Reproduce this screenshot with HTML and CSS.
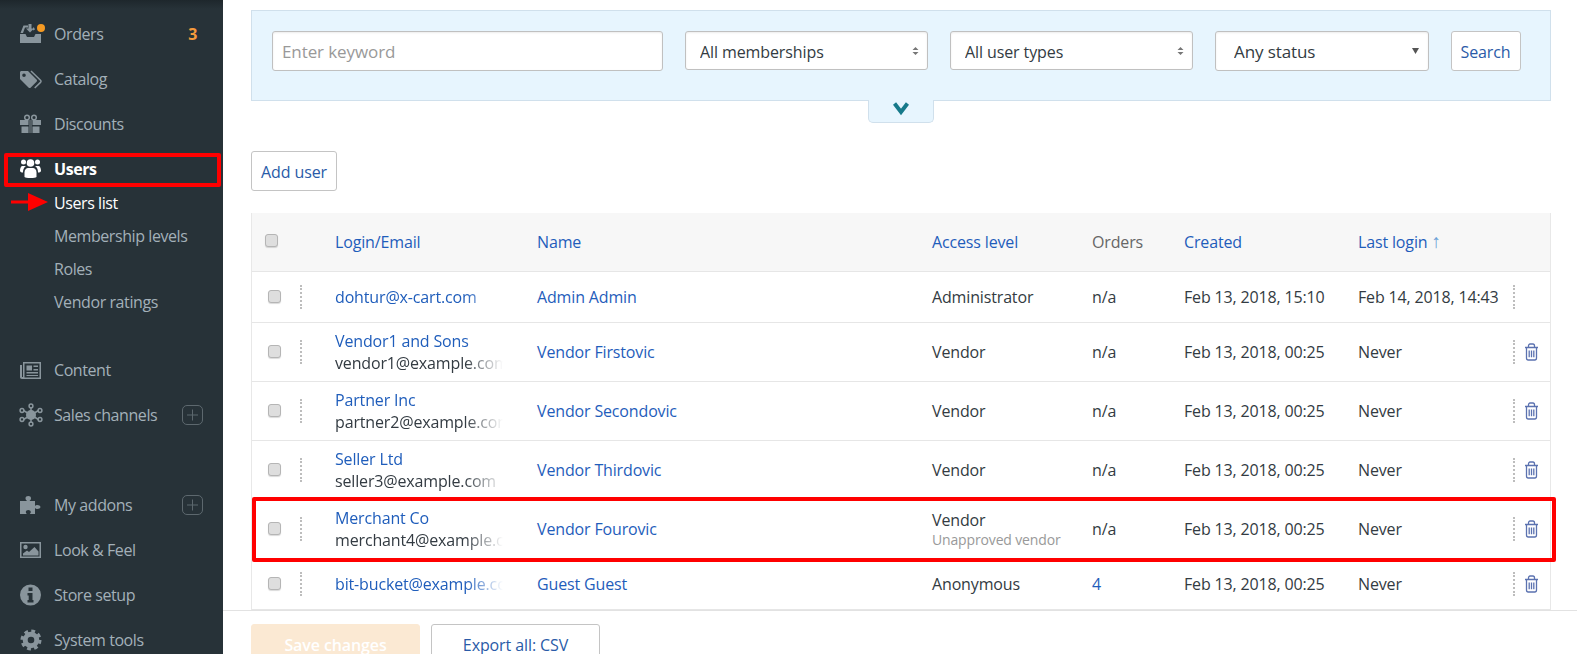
FILE: index.html
```html
<!DOCTYPE html>
<html>
  <head>
    <meta charset="UTF-8" />
    <title>Users list</title>
    <link rel="stylesheet" href="styles.css">
  </head>
  <body>
    <aside class="sidebar">
      <nav class="nav-group">
        <a class="nav-item">
          <svg class="nav-icon" viewBox="0 0 24 24">
            <path d="M1 12h5.500l1.500 3h7l1.500-3H22v9H1z"/>
            <path d="M1.500 11l3-7.500H9v2H6L4 11zM14 5.500h1l1 2-2 1z"/>
            <path d="M9.500 2h3v4.500H15L11 10.500 7 6.500h2.500z"/>
            <circle class="nav-icon-dot" cx="22" cy="6" r="4"/>
          </svg>
          <span class="nav-label">Orders</span>
          <span class="nav-count">3</span>
        </a>
        <a class="nav-item">
          <svg class="nav-icon" viewBox="0 0 24 24">
            <path fill-rule="evenodd" d="M1 5.500v6.500l8.500 8.500c.7.700 1.600.700 2.300 0l5.700-5.700c.7-.7.7-1.600 0-2.300L9 4H2.500C1.600 4 1 4.600 1 5.500zM5 6.500a1.800 1.800 0 1 1 0 3.600 1.800 1.800 0 0 1 0-3.600z"/>
            <path class="nav-icon-line" d="M12 4l9.500 9.200c.7.700.7 1.500 0 2.200l-5.800 5.600"/>
          </svg>
          <span class="nav-label">Catalog</span>
        </a>
        <a class="nav-item">
          <svg class="nav-icon" viewBox="0 0 24 24">
            <path d="M1 8h8.500v5H1zM13.500 8H22v5h-8.500zM2.500 14.500h7V21h-7zM13.500 14.500h7V21h-7z"/>
            <path d="M10 8h3v13h-3z" opacity=".45"/>
            <circle class="nav-icon-line" cx="8" cy="5.500" r="2.300"/>
            <circle class="nav-icon-line" cx="15" cy="5.500" r="2.300"/>
          </svg>
          <span class="nav-label">Discounts</span>
        </a>
        <div class="nav-item nav-item-active">
          <svg class="nav-icon" viewBox="0 0 24 24">
            <circle cx="11.500" cy="6" r="3.800"/>
            <circle cx="4.500" cy="5" r="2.500"/>
            <circle cx="18.500" cy="5" r="2.500"/>
            <path d="M5.500 20v-4.500c0-3 1.800-4.500 3.500-4.500h5c1.700 0 3.500 1.500 3.500 4.500V20c-1 .6-2.500 1-6 1s-5-.4-6-1z"/>
            <path d="M1 14c0-3 1-5 2.500-5H7c-1 .8-1.500 1.300-2 2.200-.7 1-1 2.500-1 4.300C2.500 15.500 1.500 15 1 14zM22 14c0-3-1-5-2.500-5H16c1 .8 1.500 1.300 2 2.200.7 1 1 2.500 1 4.300 1.500 0 2.500-.5 3-1.500z"/>
          </svg>
          <span class="nav-label">Users</span>
          <span class="note-nav"></span>
        </div>
        <ul class="nav-sub">
          <li class="nav-sub-item nav-sub-current">
            Users list
            <svg class="note-arrow" viewBox="0 0 38 18">
              <path d="M1 7.500h17v-7.500L38 9 18 18v-7.500H1z"/>
            </svg>
          </li>
          <li class="nav-sub-item">Membership levels</li>
          <li class="nav-sub-item">Roles</li>
          <li class="nav-sub-item">Vendor ratings</li>
        </ul>
      </nav>

      <nav class="nav-group nav-group-content">
        <a class="nav-item">
          <svg class="nav-icon" viewBox="0 0 24 24">
            <path fill-rule="evenodd" d="M4 4h18v17H3c-1.300 0-2-.8-2-2V7h2v12h1zM5.500 5.500v14h15v-14z"/>
            <path d="M7.500 7.500h5.500v5H7.500zM14.500 7.500h4.500V9h-4.500zM14.500 11h4.500v1.500h-4.500zM7.500 14h11.500v1.500H7.500zM7.500 17h11.500v1H7.500z"/>
          </svg>
          <span class="nav-label">Content</span>
        </a>
        <a class="nav-item">
          <svg class="nav-icon" viewBox="0 0 24 24">
            <circle cx="12" cy="12" r="5"/>
            <path class="nav-icon-line" d="M12 4v16M4.500 7.500l15 9M19.500 7.500l-15 9"/>
            <circle class="nav-icon-line" cx="12" cy="3" r="1.900"/>
            <circle class="nav-icon-line" cx="12" cy="21" r="1.900"/>
            <circle class="nav-icon-line" cx="3" cy="7.500" r="1.900"/>
            <circle class="nav-icon-line" cx="21" cy="7.500" r="1.900"/>
            <circle class="nav-icon-line" cx="3" cy="16.500" r="1.900"/>
            <circle class="nav-icon-line" cx="21" cy="16.500" r="1.900"/>
          </svg>
          <span class="nav-label">Sales channels</span>
          <svg class="nav-plus" viewBox="0 0 21 20">
            <rect x=".5" y=".5" width="20" height="19" rx="4.500"/>
            <path d="M10.500 4.500v11M5 10h11"/>
          </svg>
        </a>
      </nav>

      <nav class="nav-group nav-group-tools">
        <a class="nav-item">
          <svg class="nav-icon" viewBox="0 0 24 24">
            <path d="M1 8h7c-1-1-1.500-1.800-1.500-2.800C6.500 3.800 7.700 3 9.300 3s2.700.8 2.700 2.200c0 1-.5 1.800-1.500 2.800H16v5c.8-.8 1.500-1 2.300-1 1.500 0 3.200.7 3.200 2s-1.700 2-3.200 2c-.8 0-1.500-.2-2.300-1v6h-5.200c.7-.8 1-1.400 1-2.100 0-1.300-1.200-2-2.500-2s-2.500.7-2.500 2c0 .7.300 1.300 1 2.100H1z"/>
          </svg>
          <span class="nav-label">My addons</span>
          <svg class="nav-plus" viewBox="0 0 21 20">
            <rect x=".5" y=".5" width="20" height="19" rx="4.500"/>
            <path d="M10.500 4.500v11M5 10h11"/>
          </svg>
        </a>
        <a class="nav-item">
          <svg class="nav-icon" viewBox="0 0 24 24">
            <path fill-rule="evenodd" d="M1 4h21v16H1zM2.500 5.500v13h18v-13z"/>
            <circle cx="6.500" cy="9" r="2.200"/>
            <path d="M4 17.500v-2l4-3 2 1.500 5.500-5 4 4.500v4z"/>
          </svg>
          <span class="nav-label">Look &amp; Feel</span>
        </a>
        <a class="nav-item">
          <svg class="nav-icon" viewBox="0 0 24 24">
            <path fill-rule="evenodd" d="M11.500 1.500a10.500 10.500 0 1 1 0 21 10.500 10.500 0 0 1 0-21zM9.500 4.500v3.500h4V4.500zM8.500 10v2.500h1.200v4.500H8.500v2.500h6V17h-1v-7z"/>
          </svg>
          <span class="nav-label">Store setup</span>
        </a>
        <a class="nav-item">
          <svg class="nav-icon" viewBox="0 0 24 24">
            <circle class="nav-gear-ring" cx="12" cy="12" r="5.800"/>
            <circle class="nav-gear-teeth" cx="12" cy="12" r="9"/>
          </svg>
          <span class="nav-label">System tools</span>
        </a>
      </nav>
    </aside>

    <main class="main">
      <div class="content">
        <form class="filter">
          <input class="field field-keyword" type="text" placeholder="Enter keyword" />
          <div class="select-wrap select-wide">
            <select class="field field-select"><option>All memberships</option></select>
            <svg class="select-arrows" viewBox="0 0 7 8"><path d="M3.500 0L6.500 3h-6zM3.500 8L.5 5h6z"/></svg>
          </div>
          <div class="select-wrap select-wide">
            <select class="field field-select"><option>All user types</option></select>
            <svg class="select-arrows" viewBox="0 0 7 8"><path d="M3.500 0L6.500 3h-6zM3.500 8L.5 5h6z"/></svg>
          </div>
          <div class="select-wrap select-status">
            <select class="field field-select field-status"><option>Any status</option></select>
            <svg class="select-caret" viewBox="0 0 7 6"><path d="M0 0h7L3.500 6z"/></svg>
          </div>
          <button class="btn btn-search" type="button">Search</button>
        </form>
        <div class="filter-toggle">
          <svg viewBox="0 0 16 15"><path d="M1.500 2.500L8 11l6.500-8.500"/></svg>
        </div>

        <button class="btn btn-add" type="button">Add user</button>

        <div class="table-wrap">
          <table class="users">
            <colgroup>
              <col class="col-check" />
              <col class="col-drag" />
              <col class="col-login" />
              <col class="col-name" />
              <col class="col-access" />
              <col class="col-orders" />
              <col class="col-created" />
              <col class="col-last" />
              <col />
            </colgroup>
            <thead>
              <tr>
                <th class="cell-head-check"><input class="check" type="checkbox" /></th>
                <th></th>
                <th><a class="link">Login/Email</a></th>
                <th><a class="link">Name</a></th>
                <th><a class="link">Access level</a></th>
                <th class="head-plain">Orders</th>
                <th><a class="link">Created</a></th>
                <th><a class="link">Last login</a> <span class="sort-arrow">↑</span></th>
                <th></th>
              </tr>
            </thead>
            <tbody>
              <tr class="row-short">
                <td class="cell-check"><input class="check" type="checkbox" /></td>
                <td><span class="drag"></span></td>
                <td><div class="login"><a class="link">dohtur@x-cart.com</a></div></td>
                <td><a class="link">Admin Admin</a></td>
                <td>Administrator</td>
                <td>n/a</td>
                <td>Feb 13, 2018, 15:10</td>
                <td>Feb 14, 2018, 14:43</td>
                <td class="cell-actions"><span class="drag"></span></td>
              </tr>
              <tr>
                <td class="cell-check"><input class="check" type="checkbox" /></td>
                <td><span class="drag"></span></td>
                <td><div class="login"><a class="link">Vendor1 and Sons</a><br />vendor1@example.com</div></td>
                <td><a class="link">Vendor Firstovic</a></td>
                <td>Vendor</td>
                <td>n/a</td>
                <td>Feb 13, 2018, 00:25</td>
                <td>Never</td>
                <td class="cell-actions">
                  <span class="drag"></span>
                  <svg class="trash" viewBox="0 0 15 18"><path d="M1 4.500h13M4.500 4.500V3c0-1.200.6-2 1.600-2h2.800c1 0 1.600.8 1.600 2v1.500M2.500 4.500V15c0 1.200.7 2 1.700 2h6.600c1 0 1.700-.8 1.700-2V4.500M5.200 7.500v6.800M7.500 7.500v6.800M9.800 7.500v6.800"/></svg>
                </td>
              </tr>
              <tr>
                <td class="cell-check"><input class="check" type="checkbox" /></td>
                <td><span class="drag"></span></td>
                <td><div class="login"><a class="link">Partner Inc</a><br />partner2@example.com</div></td>
                <td><a class="link">Vendor Secondovic</a></td>
                <td>Vendor</td>
                <td>n/a</td>
                <td>Feb 13, 2018, 00:25</td>
                <td>Never</td>
                <td class="cell-actions">
                  <span class="drag"></span>
                  <svg class="trash" viewBox="0 0 15 18"><path d="M1 4.500h13M4.500 4.500V3c0-1.200.6-2 1.600-2h2.800c1 0 1.600.8 1.600 2v1.500M2.500 4.500V15c0 1.200.7 2 1.700 2h6.600c1 0 1.700-.8 1.700-2V4.500M5.200 7.500v6.800M7.500 7.500v6.800M9.800 7.500v6.800"/></svg>
                </td>
              </tr>
              <tr>
                <td class="cell-check"><input class="check" type="checkbox" /></td>
                <td><span class="drag"></span></td>
                <td><div class="login"><a class="link">Seller Ltd</a><br />seller3@example.com</div></td>
                <td><a class="link">Vendor Thirdovic</a></td>
                <td>Vendor</td>
                <td>n/a</td>
                <td>Feb 13, 2018, 00:25</td>
                <td>Never</td>
                <td class="cell-actions">
                  <span class="drag"></span>
                  <svg class="trash" viewBox="0 0 15 18"><path d="M1 4.500h13M4.500 4.500V3c0-1.200.6-2 1.600-2h2.800c1 0 1.600.8 1.600 2v1.500M2.500 4.500V15c0 1.200.7 2 1.700 2h6.600c1 0 1.700-.8 1.700-2V4.500M5.200 7.500v6.800M7.500 7.500v6.800M9.800 7.500v6.800"/></svg>
                </td>
              </tr>
              <tr>
                <td class="cell-check"><input class="check" type="checkbox" /></td>
                <td><span class="drag"></span></td>
                <td><div class="login"><a class="link">Merchant Co</a><br />merchant4@example.com</div></td>
                <td><a class="link">Vendor Fourovic</a></td>
                <td>Vendor<div class="muted">Unapproved vendor</div></td>
                <td>n/a</td>
                <td>Feb 13, 2018, 00:25</td>
                <td>Never</td>
                <td class="cell-actions">
                  <span class="drag"></span>
                  <svg class="trash" viewBox="0 0 15 18"><path d="M1 4.500h13M4.500 4.500V3c0-1.200.6-2 1.600-2h2.800c1 0 1.600.8 1.600 2v1.500M2.500 4.500V15c0 1.200.7 2 1.700 2h6.600c1 0 1.700-.8 1.700-2V4.500M5.200 7.500v6.800M7.500 7.500v6.800M9.800 7.500v6.800"/></svg>
                </td>
              </tr>
              <tr class="row-short">
                <td class="cell-check"><input class="check" type="checkbox" /></td>
                <td><span class="drag"></span></td>
                <td><div class="login"><a class="link">bit-bucket@example.com</a></div></td>
                <td><a class="link">Guest Guest</a></td>
                <td>Anonymous</td>
                <td><a class="link">4</a></td>
                <td>Feb 13, 2018, 00:25</td>
                <td>Never</td>
                <td class="cell-actions">
                  <span class="drag"></span>
                  <svg class="trash" viewBox="0 0 15 18"><path d="M1 4.500h13M4.500 4.500V3c0-1.200.6-2 1.600-2h2.800c1 0 1.600.8 1.600 2v1.500M2.500 4.500V15c0 1.200.7 2 1.700 2h6.600c1 0 1.700-.8 1.700-2V4.500M5.200 7.500v6.800M7.500 7.500v6.800M9.800 7.500v6.800"/></svg>
                </td>
              </tr>
            </tbody>
          </table>
          <span class="note-row"></span>
        </div>
      </div>

      <footer class="footer">
        <button class="btn btn-save" type="button">Save changes</button>
        <button class="btn btn-export" type="button">Export all: CSV</button>
      </footer>
    </main>
  </body>
</html>
```

FILE: styles.css
```css
/* General */
* {
  box-sizing: border-box;
}

html,
body {
  height: 654px;
  overflow: hidden;
}

body {
  margin: 0;
  display: flex;
  font-family: "Open Sans", Arial, sans-serif;
  font-size: 16px;
  letter-spacing: -0.15px;
  color: #333b42;
  background-color: #fff;
}

/* Sidebar */
.sidebar {
  flex: 0 0 223px;
  padding-top: 11px;
  background: linear-gradient(#1e272c, #273238 9px);
  letter-spacing: -0.42px;
}

.nav-group-content {
  margin-top: 28.500px;
}

.nav-group-tools {
  margin-top: 45px;
}

.nav-item {
  position: relative;
  display: flex;
  align-items: center;
  height: 45px;
  padding-left: 19px;
  color: #a3b0b8;
}

.nav-icon {
  flex: none;
  width: 24px;
  height: 24px;
  margin-right: 11px;
  overflow: visible;
  fill: #89959c;
}

.nav-icon-dot {
  fill: #f59a23;
}

.nav-icon-line {
  fill: none;
  stroke: #89959c;
  stroke-width: 1.500;
}

.nav-gear-ring {
  fill: none;
  stroke: #89959c;
  stroke-width: 5;
}

.nav-gear-teeth {
  fill: none;
  stroke: #89959c;
  stroke-width: 3;
  stroke-dasharray: 3.800 3.270;
}

.nav-label {
  flex: 1;
}

.nav-count {
  margin-right: 26px;
  font-weight: 700;
  color: #f59a3c;
}

.nav-plus {
  flex: none;
  width: 21px;
  height: 20px;
  margin-right: 20px;
  fill: none;
  stroke: #5d686e;
}

.nav-item-active {
  color: #fff;
  font-weight: 700;
}

.nav-item-active .nav-icon {
  fill: #fff;
}

.nav-sub {
  margin: -4.500px 0 0;
  padding: 0;
  list-style: none;
}

.nav-sub-item {
  position: relative;
  height: 33px;
  padding-left: 54px;
  line-height: 33px;
  color: #a3b0b8;
}

.nav-sub-current {
  color: #fff;
}

/* Red annotations on top of the screenshot */
.note-nav {
  position: absolute;
  top: 7px;
  left: 4px;
  width: 217px;
  height: 34px;
  border: 4px solid #f00;
  border-radius: 2px;
}

.note-arrow {
  position: absolute;
  top: 6.500px;
  left: 10px;
  width: 38px;
  height: 18px;
  fill: #f00;
}

.note-row {
  position: absolute;
  top: 284px;
  left: 1px;
  width: 1304px;
  height: 65px;
  border: 4px solid #f00;
  border-radius: 2px;
  pointer-events: none;
}

/* Main column */
.main {
  flex: 1;
  min-width: 0;
  display: flex;
  flex-direction: column;
}

.content {
  padding: 10px 26px 0 28px;
}

.filter {
  display: flex;
  align-items: flex-start;
  gap: 22px;
  height: 91px;
  padding: 20px 20px 0;
  background-color: #e7f5fe;
  border: 1px solid #d0e0ec;
}

.field {
  height: 40px;
  background-color: #fff;
  border: 1px solid #c0c0c0;
  border-radius: 3px;
  box-shadow: inset 0 1px 2px rgba(0, 0, 0, 0.08);
  font-family: inherit;
  font-size: 16px;
  letter-spacing: -0.1px;
  color: #333b42;
}

.field-keyword {
  flex: 0 0 391px;
  padding: 0 10px 0 9px;
  font-size: 17px;
}

.field-keyword::placeholder {
  color: #999;
}

.select-wrap {
  position: relative;
  flex: none;
}

.select-wide {
  width: 243px;
}

.select-status {
  width: 213.500px;
}

.field-select {
  display: block;
  width: 100%;
  height: 39px;
  padding: 2px 24px 0 14px;
  appearance: none;
  -webkit-appearance: none;
}

.field-status {
  height: 40px;
  padding-top: 0;
  padding-left: 18px;
  font-size: 17px;
}

.select-arrows {
  position: absolute;
  top: 16px;
  right: 9px;
  width: 7px;
  height: 8px;
  fill: #777;
}

.select-caret {
  position: absolute;
  top: 17px;
  right: 10px;
  width: 7px;
  height: 6px;
  fill: #555;
}

.btn {
  height: 40px;
  padding: 2px 0 0;
  background-color: #fff;
  border: 1px solid #c4c4c4;
  border-radius: 3px;
  font-family: inherit;
  font-size: 16px;
  letter-spacing: -0.1px;
  color: #2a5ba8;
}

.btn-search {
  flex: 0 0 70px;
}

.filter-toggle {
  width: 66px;
  height: 23px;
  margin: -1px auto 0;
  padding-top: 1px;
  background-color: #e7f5fe;
  border: 1px solid #d0e0ec;
  border-top: 0;
  border-radius: 0 0 5px 5px;
  text-align: center;
}

.filter-toggle svg {
  display: block;
  width: 16px;
  height: 15px;
  margin: 0 auto;
  fill: none;
  stroke: #16798a;
  stroke-width: 4;
}

.btn-add {
  display: block;
  width: 86px;
  margin-top: 28px;
}

/* Table */
.table-wrap {
  position: relative;
  margin-top: 22px;
}

.users {
  width: 100%;
  table-layout: fixed;
  border-collapse: separate;
  border-spacing: 0;
  border-right: 1px solid #e8e8e8;
  border-left: 1px solid #e8e8e8;
}

.col-check { width: 36px; }
.col-drag { width: 47px; }
.col-login { width: 202px; }
.col-name { width: 395px; }
.col-access { width: 160px; }
.col-orders { width: 92px; }
.col-created { width: 174px; }
.col-last { width: 147px; }

.users th,
.users td {
  height: 59px;
  padding: 0;
  border-bottom: 1px solid #e6e6e6;
  text-align: left;
  vertical-align: middle;
  line-height: 22px;
  white-space: nowrap;
}

.users th {
  background-color: #f7f7f7;
  font-weight: 400;
}

.users .row-short td {
  height: 51px;
}

.users .cell-check {
  padding-left: 16px;
}

.users .cell-head-check {
  padding-left: 13px;
}

.head-plain {
  color: #666;
}

.link {
  color: #1f5dbb;
}

.sort-arrow {
  font-family: "Liberation Sans", Arial, sans-serif;
  font-size: 19px;
  line-height: 16px;
  color: #6b9fd6;
}

.check {
  display: block;
  width: 13px;
  height: 13px;
  margin: -2px 0 0;
  appearance: none;
  -webkit-appearance: none;
  background-color: #dedede;
  border: 1px solid #b5b5b5;
  border-radius: 3px;
  box-shadow: 0 1px 1px rgba(0, 0, 0, 0.15);
}

.cell-head-check .check {
  margin-top: -4px;
}

.drag {
  display: block;
  width: 0;
  height: 24px;
  margin-left: 12px;
  border-left: 2px dotted #bdbdbd;
}

.login {
  width: 168px;
  overflow: hidden;
  -webkit-mask-image: linear-gradient(to right, #000 130px, transparent 168px);
  mask-image: linear-gradient(to right, #000 130px, transparent 168px);
}

.muted {
  font-size: 14px;
  line-height: 18px;
  color: #999;
}

.cell-actions {
  position: relative;
}

.users .cell-actions .drag {
  margin-left: 8px;
}

.trash {
  position: absolute;
  top: 50%;
  left: 19px;
  width: 15px;
  height: 18px;
  margin-top: -9px;
  fill: none;
  stroke: #5b72b0;
  stroke-width: 1.300;
}

/* Bottom bar */
.footer {
  display: flex;
  gap: 11px;
  flex: 1;
  padding: 13px 0 0 28px;
  border-top: 1px solid #e2e2e2;
}

.btn-save {
  width: 169px;
  background-color: #fbe9d3;
  border-color: #fbe9d3;
  font-weight: 600;
  color: #fff;
}

.btn-export {
  width: 169px;
}
```
